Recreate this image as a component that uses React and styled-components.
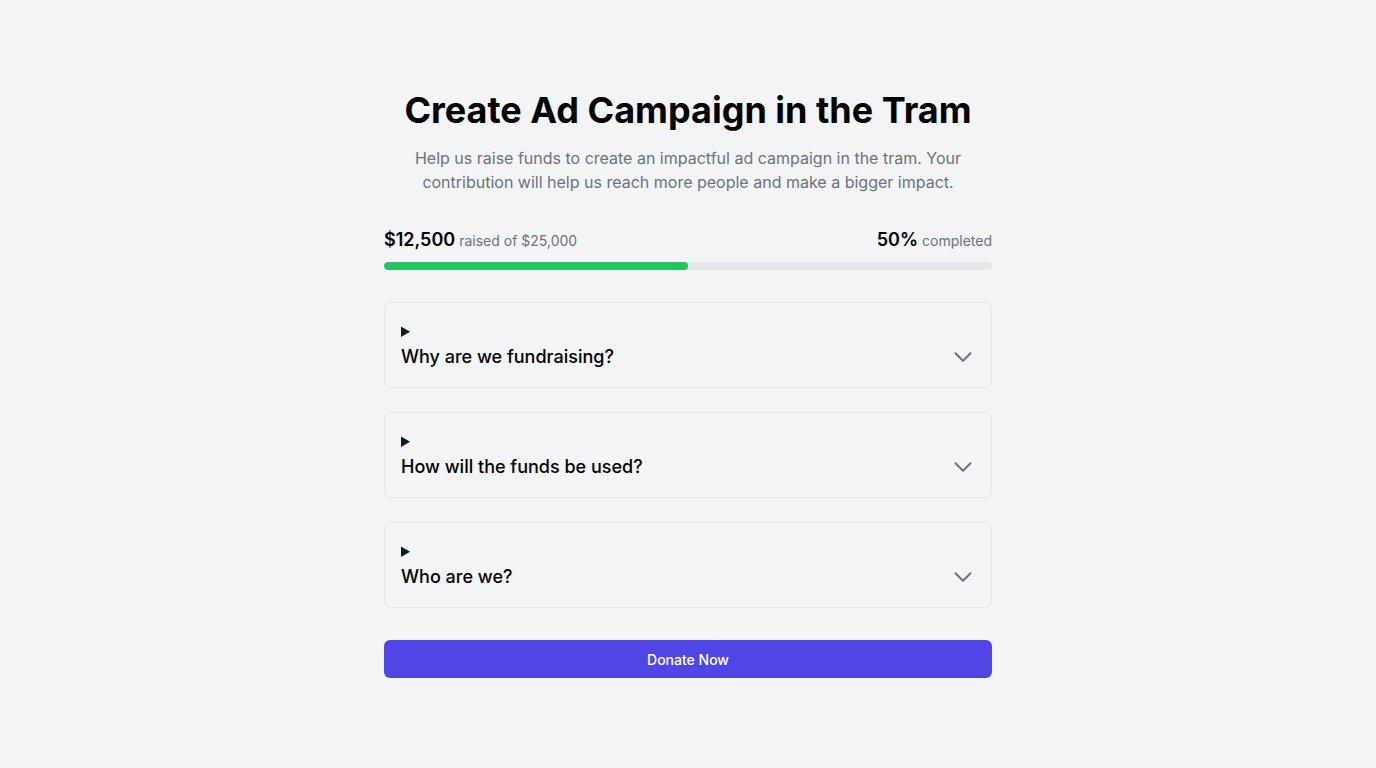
import styled, { createGlobalStyle } from "styled-components";

const GlobalStyle = createGlobalStyle`
  * { box-sizing: border-box; }
  body {
    margin: 0;
    background: #f3f4f6;
    font-family: Inter, "Noto Sans", sans-serif;
    color: #111827;
  }
`;

const Page = styled.main`
  min-height: 768px;
  padding-top: 90px;
`;

const Wrap = styled.div`
  width: 608px;
  margin: 0 auto;
`;

const Title = styled.h1`
  margin: 0;
  font-size: 36px;
  line-height: 40px;
  font-weight: 700;
  text-align: center;
  color: #000;
`;

const Intro = styled.p`
  margin: 16px 0 0;
  font-size: 16px;
  line-height: 24px;
  color: #6b7280;
  text-align: center;
  padding: 0 24px;
`;

const Stats = styled.div`
  margin-top: 32px;
  display: flex;
  justify-content: space-between;
  align-items: baseline;
  line-height: 28px;
`;

const Big = styled.span`
  font-size: 18px;
  font-weight: 600;
  color: #000;
`;

const Small = styled.span`
  font-size: 14px;
  color: #6b7280;
  margin-left: 4px;
`;

const Track = styled.div`
  margin-top: 7px;
  height: 8px;
  border-radius: 9999px;
  background: #e5e7eb;
  overflow: hidden;
`;

const Fill = styled.div`
  height: 100%;
  background: #22c55e;
  border-radius: 9999px;
`;

const List = styled.div`
  margin-top: 32px;
  display: flex;
  flex-direction: column;
  gap: 24px;
`;

const Item = styled.details`
  border: 1px solid #e5e7eb;
  border-radius: 6px;
  padding: 16px;
`;

const Summary = styled.summary`
  cursor: pointer;
  font-size: 16px;
  line-height: 24px;
`;

const Row = styled.div`
  display: flex;
  justify-content: space-between;
  align-items: center;
`;

const Question = styled.h3`
  margin: 0;
  font-size: 18px;
  line-height: 28px;
  font-weight: 500;
  color: #000;
`;

const Body = styled.p`
  margin: 12px 0 0;
  font-size: 15px;
  line-height: 24px;
  color: #4b5563;
`;

const Donate = styled.button`
  margin-top: 32px;
  width: 100%;
  height: 38px;
  border: none;
  border-radius: 6px;
  background: #4f46e5;
  color: #fff;
  font-family: Inter, "Noto Sans", sans-serif;
  font-size: 14px;
  font-weight: 500;
  cursor: pointer;
`;

const Chevron = () => (
  <svg width="24" height="24" viewBox="0 0 24 24" fill="none" stroke="#6b7280" strokeWidth="2">
    <path d="M19.5 8.25l-7.5 7.5-7.5-7.5" strokeLinecap="round" strokeLinejoin="round" />
  </svg>
);

const faqs = [
  {
    q: "Why are we fundraising?",
    a: "We want to bring our message to thousands of daily commuters with an eye-catching ad campaign in the tram.",
  },
  {
    q: "How will the funds be used?",
    a: "Funds cover design, printing and the rental of ad space inside the tram for the duration of the campaign.",
  },
  {
    q: "Who are we?",
    a: "A small group of volunteers who care about our city and the people in it.",
  },
];

export default function App() {
  const raised = 12500;
  const goal = 25000;
  const pct = Math.round((raised / goal) * 100);
  return (
    <Page>
      <GlobalStyle />
      <Wrap>
        <Title>Create Ad Campaign in the Tram</Title>
        <Intro>
          Help us raise funds to create an impactful ad campaign in the tram. Your contribution will
          help us reach more people and make a bigger impact.
        </Intro>
        <Stats>
          <div>
            <Big>${raised.toLocaleString("en-US")}</Big>
            <Small>raised of ${goal.toLocaleString("en-US")}</Small>
          </div>
          <div>
            <Big>{pct}%</Big>
            <Small>completed</Small>
          </div>
        </Stats>
        <Track>
          <Fill style={{ width: `${pct}%` }} />
        </Track>
        <List>
          {faqs.map((f) => (
            <Item key={f.q}>
              <Summary>
                <Row>
                  <Question>{f.q}</Question>
                  <Chevron />
                </Row>
              </Summary>
              <Body>{f.a}</Body>
            </Item>
          ))}
        </List>
        <Donate>Donate Now</Donate>
      </Wrap>
    </Page>
  );
}
